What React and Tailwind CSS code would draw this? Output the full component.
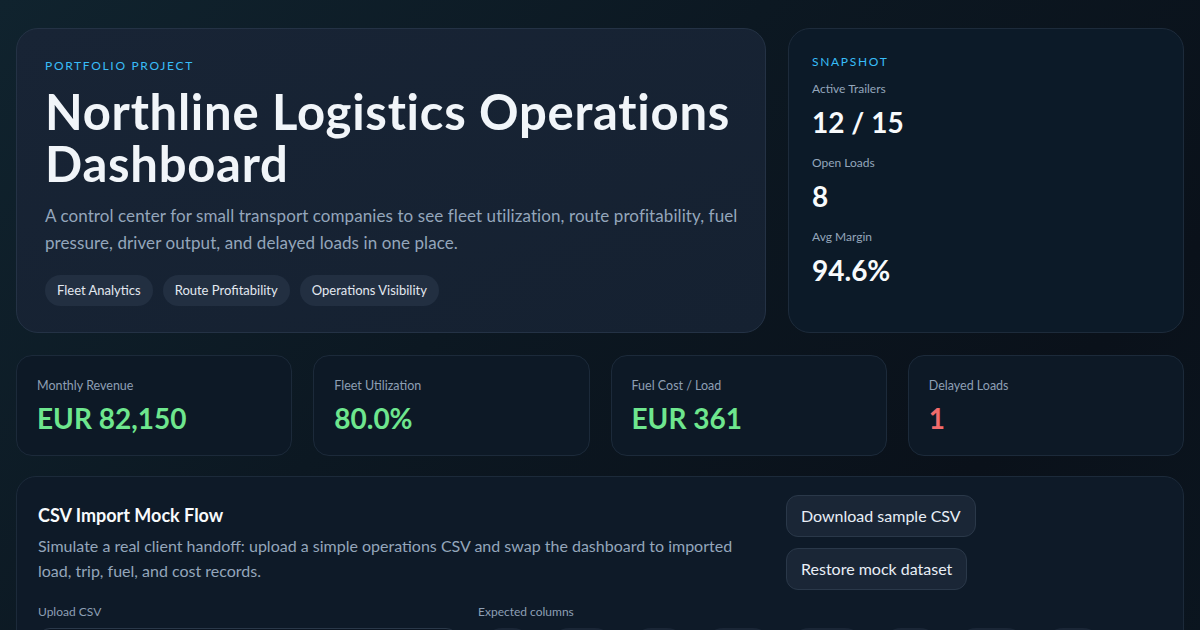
import React from "react";

const snapshot = [
  { label: "Active Trailers", value: "12 / 15" },
  { label: "Open Loads", value: "8" },
  { label: "Avg Margin", value: "94.6%" },
];

const stats = [
  { label: "Monthly Revenue", value: "EUR 82,150", tone: "text-[#6ee68e]" },
  { label: "Fleet Utilization", value: "80.0%", tone: "text-[#6ee68e]" },
  { label: "Fuel Cost / Load", value: "EUR 361", tone: "text-[#6ee68e]" },
  { label: "Delayed Loads", value: "1", tone: "text-[#f26b6b]" },
];

const columns = ["date", "load_id", "route", "revenue", "fuel_cost", "driver", "distance", "status"];

export default function App() {
  return (
    <div
      className="min-h-screen w-full bg-[linear-gradient(135deg,#10232e_0%,#0c1822_40%,#0a111a_75%,#0b1620_100%)] px-4 pt-7 pb-8 text-[#e8eef6]"
      style={{ fontFamily: 'Lato, "Noto Sans", sans-serif' }}
    >
      <div className="grid grid-cols-[750px_1fr] gap-[22px]">
        <section className="rounded-[22px] border border-[#243245] bg-[linear-gradient(160deg,#182435,#152131)] pl-[28px] pr-[18px] pt-[28px] pb-[26px]">
          <p className="text-[12px] uppercase tracking-[0.14em] text-[#38bdf8]">Portfolio Project</p>
          <h1 className="mt-[10px] text-[49px] font-bold leading-[52px] tracking-[0.015em] text-[#f1f5f9]">
            Northline Logistics Operations Dashboard
          </h1>
          <p className="mt-[13px] text-[17px] leading-[27px] tracking-[0.005em] text-[#94a6bb]">
            A control center for small transport companies to see fleet utilization, route profitability, fuel
            pressure, driver output, and delayed loads in one place.
          </p>
          <div className="mt-[19px] flex gap-[10px]">
            {["Fleet Analytics", "Route Profitability", "Operations Visibility"].map((t) => (
              <span key={t} className="flex h-[31px] items-center rounded-full bg-[#222f41] px-[12px] text-[13px] text-[#e2e8f0]">
                {t}
              </span>
            ))}
          </div>
        </section>

        <section className="rounded-[22px] border border-[#1d2b3b] bg-[#0c1a28] px-[23px] pt-[24px]">
          <p className="text-[12px] uppercase tracking-[0.14em] text-[#38bdf8]">Snapshot</p>
          <div className="mt-[10px] flex flex-col gap-[15px]">
            {snapshot.map((s) => (
              <div key={s.label}>
                <p className="text-[12px] leading-[16px] text-[#94a6bb]">{s.label}</p>
                <p className="mt-[7px] text-[28px] font-bold leading-[36px] text-[#f8fafc]">{s.value}</p>
              </div>
            ))}
          </div>
        </section>
      </div>

      <div className="mt-[22px] grid grid-cols-4 gap-[21px]">
        {stats.map((s) => (
          <div key={s.label} className="h-[101px] rounded-[16px] border border-[#1c2a3a] bg-[#0d1926] px-[20px] pt-[21px]">
            <p className="text-[12.5px] leading-[18px] text-[#8d9fb4]">{s.label}</p>
            <p className={`mt-[6px] text-[28px] font-bold leading-[34px] ${s.tone}`}>{s.value}</p>
          </div>
        ))}
      </div>

      <section className="mt-[20px] rounded-[20px] border border-[#1c2a3a] bg-[#0e1a28] px-[21px] pt-[18px] pb-6">
        <div className="flex gap-[40px]">
          <div className="w-[708px] pt-[8px]">
            <h2 className="text-[18px] font-bold leading-[24px] text-[#f8fafc]">CSV Import Mock Flow</h2>
            <p className="mt-[6px] text-[16px] leading-[25px] text-[#94a6bb]">
              Simulate a real client handoff: upload a simple operations CSV and swap the dashboard to imported
              load, trip, fuel, and cost records.
            </p>
          </div>
          <div className="flex flex-col items-start gap-[11px]">
            <button className="h-[42px] rounded-[12px] border border-[#2a3849] bg-[#1a2636] px-[14px] text-[16px] text-[#e8eef6]">
              Download sample CSV
            </button>
            <button className="h-[42px] rounded-[12px] border border-[#2a3849] bg-[#1a2636] px-[14px] text-[16px] text-[#e8eef6]">
              Restore mock dataset
            </button>
          </div>
        </div>
        <div className="mt-[14px] grid grid-cols-[420px_1fr] gap-[20px]">
          <div>
            <p className="text-[12px] leading-[16px] text-[#8d9fb4]">Upload CSV</p>
            <div className="mt-[8px] h-[40px] rounded-[12px] border border-[#2a3849] bg-[#0b1522]" />
          </div>
          <div>
            <p className="text-[12px] leading-[16px] text-[#8d9fb4]">Expected columns</p>
            <div className="mt-[8px] flex flex-wrap gap-[20px] pl-[6px]">
              {columns.map((c) => (
                <span key={c} className="rounded-full bg-[#1a2636] px-[12px] pt-[12px] pb-[6px] text-[12px] text-[#cbd5e1]">
                  {c}
                </span>
              ))}
            </div>
          </div>
        </div>
      </section>
    </div>
  );
}
